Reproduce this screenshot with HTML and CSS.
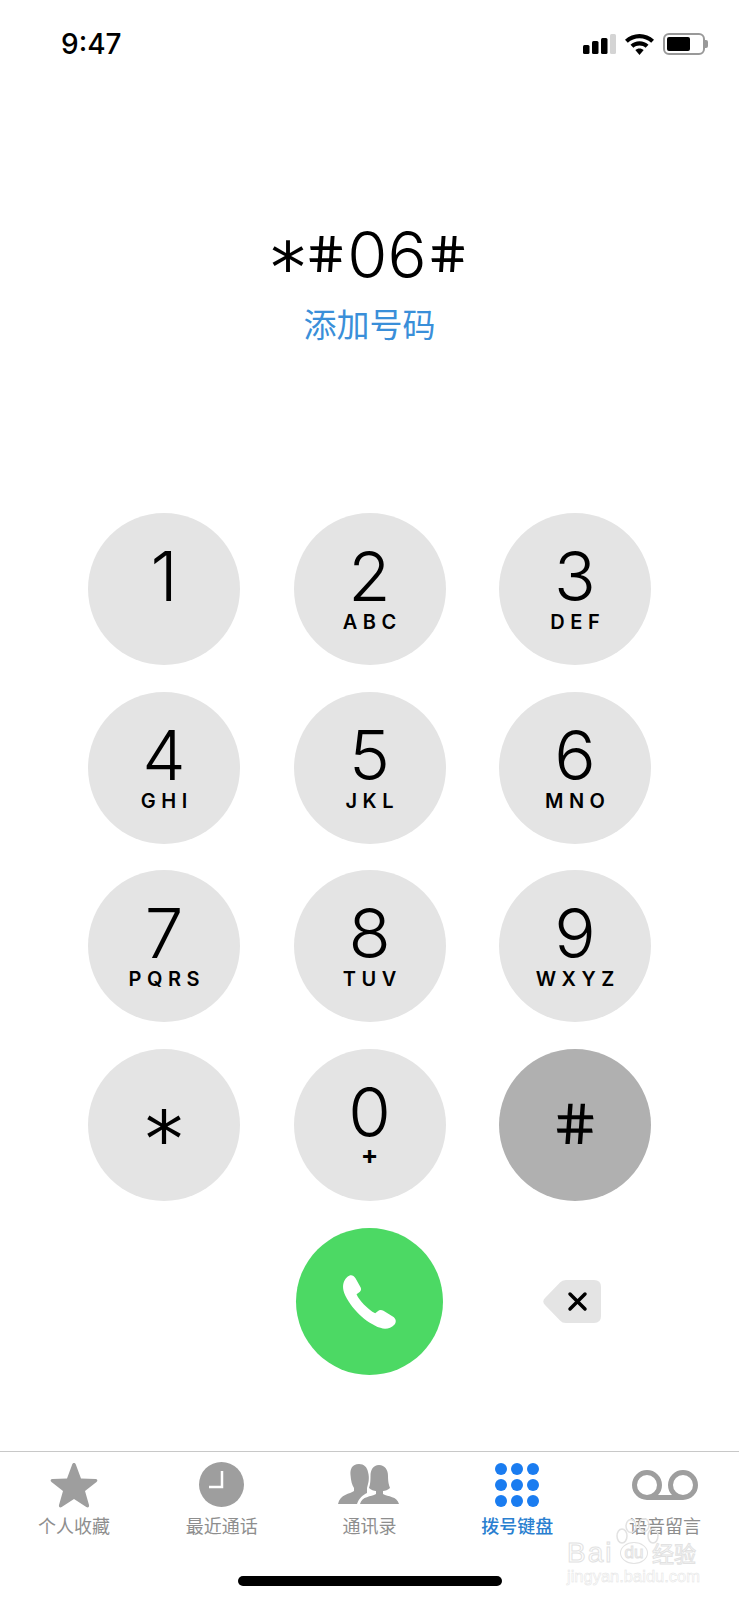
FILE: index.html
```html
<!DOCTYPE html>
<html lang="zh-CN">
<head>
    <meta charset="UTF-8">
    <meta name="viewport" content="width=device-width, initial-scale=1.0">
    <title>Keypad</title>
    <link rel="stylesheet" href="styles.css">
</head>
<body>

<div class="phone">

    <!-- Status bar -->
    <div class="status-bar">
        <span class="time">9:47</span>
        <div class="status-icons">
            <svg class="signal" width="33" height="20" viewBox="0 0 33 20">
                <rect x="0" y="11" width="6.5" height="9" rx="1.5" fill="#000"/>
                <rect x="9" y="7" width="6.5" height="13" rx="1.5" fill="#000"/>
                <rect x="18" y="4" width="6.5" height="16" rx="1.5" fill="#000"/>
                <rect x="27" y="0" width="6" height="20" rx="1.5" fill="#d4d4d4"/>
            </svg>
            <svg class="wifi" width="29" height="21" viewBox="0 0 29 21">
                <path d="M14.5 0C9 0 4 2.1 0 5.7l2.8 3C6 5.800 10 4.200 14.500 4.200S23 5.800 26.200 8.700l2.800-3C25 2.100 20 0 14.500 0z" fill="#000"/>
                <path d="M14.500 7.200c-3.500 0-6.600 1.300-9 3.500l2.900 3.100c1.600-1.400 3.700-2.300 6.100-2.300s4.500.9 6.100 2.300l2.900-3.100c-2.400-2.200-5.500-3.500-9-3.500z" fill="#000"/>
                <path d="M14.500 14.400c-1.700 0-3.100.6-4.200 1.600l4.200 5 4.200-5c-1.100-1-2.500-1.600-4.200-1.600z" fill="#000"/>
            </svg>
            <div class="battery">
                <div class="battery-body"><div class="battery-level"></div></div>
                <div class="battery-nub"></div>
            </div>
        </div>
    </div>

    <!-- Dialled number -->
    <div class="dial-display">
        <div class="dial-number"><span class="sym-star">*</span><span class="sym-hash">#</span>06<span class="sym-hash">#</span></div>
        <div class="add-number">添加号码</div>
    </div>

    <!-- Keypad -->
    <div class="keypad">
        <div class="key"><span class="digit">1</span></div>
        <div class="key"><span class="digit">2</span><span class="letters">ABC</span></div>
        <div class="key"><span class="digit">3</span><span class="letters">DEF</span></div>
        <div class="key"><span class="digit">4</span><span class="letters">GHI</span></div>
        <div class="key"><span class="digit">5</span><span class="letters">JKL</span></div>
        <div class="key"><span class="digit">6</span><span class="letters">MNO</span></div>
        <div class="key"><span class="digit">7</span><span class="letters">PQRS</span></div>
        <div class="key"><span class="digit">8</span><span class="letters">TUV</span></div>
        <div class="key"><span class="digit">9</span><span class="letters">WXYZ</span></div>
        <div class="key key-symbol"><span class="sym-star key-star">*</span></div>
        <div class="key"><span class="digit">0</span><span class="letters plus">+</span></div>
        <div class="key key-symbol key-pressed"><span class="sym-hash key-hash">#</span></div>

        <!-- Call and delete -->
        <div class="call-btn">
            <svg class="call-icon" width="58" height="58" viewBox="0 0 56 56">
                <path d="M6 3C9 0 12 1 14 4L19 13C20 15 19 17 17 18L15 19.500C17 25 26 34 33 38L35.500 36C37 34.500 39 34.500 41 35.500L50 41C53 43 54 46 51.500 49C48 52.500 43 54 38 52C24 47 9 33 3 18C1 12 2 7 6 3Z" fill="#fff"/>
            </svg>
        </div>
        <div class="delete-btn">
            <svg width="58" height="43" viewBox="0 0 58 43">
                <path d="M17 2.500Q19 0 23 0H51Q58 0 58 7V36Q58 43 51 43H23Q19 43 17 40.500L2 25Q-1.500 21.500 2 18Z" fill="#e4e4e4"/>
                <path d="M27 14L42 29M42 14L27 29" stroke="#000" stroke-width="3.500" stroke-linecap="round"/>
            </svg>
        </div>
    </div>

    <!-- Tab bar -->
    <div class="tab-bar">
        <div class="tab">
            <div class="tab-icon">
                <svg width="48" height="46" viewBox="0 0 48 46">
                    <path d="M24 1C25 1 25.500 1.600 26 3L31 16.500L45.500 17C47.500 17.100 48 18.800 46.500 20L35 29L39 43C39.500 45 38 46 36.300 45L24 37L11.700 45C10 46 8.500 45 9 43L13 29L1.500 20C0 18.800.5 17.100 2.500 17L17 16.500L22 3C22.500 1.600 23 1 24 1Z" fill="#9e9e9e"/>
                </svg>
            </div>
            <span class="tab-label">个人收藏</span>
        </div>
        <div class="tab">
            <div class="tab-icon">
                <svg width="45" height="45" viewBox="0 0 45 45">
                    <circle cx="22.500" cy="22.500" r="22.500" fill="#9e9e9e"/>
                    <path d="M23 9V25H10" fill="none" stroke="#fff" stroke-width="2.500"/>
                </svg>
            </div>
            <span class="tab-label">最近通话</span>
        </div>
        <div class="tab">
            <div class="tab-icon">
                <svg width="62" height="41" viewBox="0 0 62 41">
                    <path d="M21 0C14 0 12 5 12.500 11C13 17 14 21 16 24V27C12 30 2 30 0 40H19C21 34 25 31 29 29V24C30 20 32 15 30 8C29 3 26 0 21 0Z" fill="#9e9e9e"/>
                    <path d="M41 1C35 1 32.500 6 32.500 12C32.500 18 32 21 31 24C33 26 36 27 38 27V30C33 33 24 32 22 40H61C59 32 50 33 45 30V27C47 27 50 26 52 24C51 21 50 18 50 12C50 6 47 1 41 1Z" fill="#9e9e9e"/>
                </svg>
            </div>
            <span class="tab-label">通讯录</span>
        </div>
        <div class="tab tab-active">
            <div class="tab-icon">
                <div class="dots">
                    <i></i><i></i><i></i>
                    <i></i><i></i><i></i>
                    <i></i><i></i><i></i>
                </div>
            </div>
            <span class="tab-label">拨号键盘</span>
        </div>
        <div class="tab">
            <div class="tab-icon">
                <svg width="66" height="30" viewBox="0 0 66 30">
                    <circle cx="15" cy="15" r="12.500" fill="none" stroke="#9e9e9e" stroke-width="5"/>
                    <circle cx="51" cy="15" r="12.500" fill="none" stroke="#9e9e9e" stroke-width="5"/>
                    <path d="M15 27.500H51" stroke="#9e9e9e" stroke-width="5"/>
                </svg>
            </div>
            <span class="tab-label">语音留言</span>
        </div>
    </div>

    <div class="home-indicator"></div>

    <!-- Watermark over the corner -->
    <div class="watermark">
        <svg class="wm-paw" width="50" height="32" viewBox="0 0 50 32">
            <ellipse cx="8" cy="18" rx="5" ry="7" fill="none" stroke="#e2e2e2" stroke-width="1.500"/>
            <ellipse cx="17" cy="8" rx="5" ry="6.500" fill="none" stroke="#e2e2e2" stroke-width="1.500"/>
            <ellipse cx="30" cy="7" rx="5" ry="6.500" fill="none" stroke="#e2e2e2" stroke-width="1.500"/>
            <ellipse cx="39" cy="18" rx="5" ry="7" fill="none" stroke="#e2e2e2" stroke-width="1.500"/>
        </svg>
        <div class="wm-logo"><span class="wm-bai">Bai</span><span class="wm-du">du</span><span class="wm-cjk">经验</span></div>
        <div class="wm-url">jingyan.baidu.com</div>
    </div>
</div>

</body>
</html>
```

FILE: styles.css
```css
body {
    margin: 0;
    background-color: #fff;
    font-family: Inter, "Noto Sans CJK SC", sans-serif;
    color: #000;
}

.phone {
    position: relative;
    width: 739px;
    height: 1600px;
    overflow: hidden;
}

/* Status bar */
.status-bar {
    display: flex;
    justify-content: space-between;
    align-items: center;
    height: 88px;
    padding: 0 31px 0 61px;
    box-sizing: border-box;
}

.time {
    font-size: 28px;
    font-weight: 500;
}

.status-icons {
    display: flex;
    align-items: center;
    gap: 9px;
}

.battery {
    display: flex;
    align-items: center;
}

.battery-body {
    width: 42px;
    height: 22px;
    box-sizing: border-box;
    border: 2px solid #999;
    border-radius: 6px;
    padding: 2px;
}

.battery-level {
    width: 23px;
    height: 100%;
    background: #000;
    border-radius: 2px;
}

.battery-nub {
    width: 3px;
    height: 8px;
    background: #999;
    border-radius: 0 2px 2px 0;
}

/* Number */
.dial-display {
    height: 425px;
    padding-top: 132px;
    box-sizing: border-box;
    text-align: center;
}

.dial-number {
    display: flex;
    justify-content: center;
    align-items: center;
    height: 70px;
    font-size: 65px;
    font-weight: 300;
    line-height: 70px;
}

/* the real * and # glyphs are small and slanted, so they get pulled down and straightened */
.sym-star {
    display: inline-block;
    font-family: "DejaVu Sans", sans-serif;
    font-size: 70px;
    font-weight: 400;
    line-height: 70px;
    transform: translateY(13px);
}

.sym-hash {
    display: inline-block;
    font-family: "DejaVu Sans", sans-serif;
    font-size: 50px;
    font-weight: 400;
    line-height: 70px;
    transform: skewX(10deg);
}

.add-number {
    margin-top: 11px;
    font-family: "Noto Sans CJK SC", sans-serif;
    font-size: 33px;
    font-weight: 400;
    line-height: 44px;
    color: #3a8fd9;
}

/* Keypad */
.keypad {
    display: grid;
    grid-template-columns: repeat(3, 152px);
    grid-auto-rows: 152px;
    column-gap: 53.500px;
    row-gap: 26.700px;
    justify-content: center;
}

.key {
    display: flex;
    flex-direction: column;
    align-items: center;
    background-color: #e4e4e4;
    border-radius: 50%;
}

.key-symbol {
    justify-content: center;
}

.key-pressed {
    background-color: #b0b0b0;
}

.digit {
    margin-top: 32px;
    font-size: 69px;
    font-weight: 300;
    line-height: 62px;
}

.letters {
    margin-top: 4px;
    font-size: 20px;
    font-weight: 600;
    line-height: 22px;
    letter-spacing: 5.500px;
    padding-left: 5.500px;
}

.plus {
    margin-top: 1px;
    font-size: 26px;
    font-weight: 700;
    letter-spacing: 0;
    padding-left: 0;
}

.key-star {
    font-size: 76px;
    transform: translateY(15px);
}

.key-hash {
    font-size: 56px;
}

.call-btn {
    grid-column: 2;
    display: flex;
    justify-content: center;
    align-items: center;
    width: 147px;
    height: 147px;
    justify-self: center;
    background-color: #4cd964;
    border-radius: 50%;
}

.call-icon {
    margin-top: 4px;
}

.delete-btn {
    display: flex;
    height: 147px;
    align-items: center;
    margin-left: 44px;
}

/* Tab bar */
.tab-bar {
    display: flex;
    margin-top: 71px;
    border-top: 1px solid #c8c8c8;
    height: 122px;
    box-sizing: border-box;
}

.tab {
    flex: 1;
    display: flex;
    flex-direction: column;
    align-items: center;
    color: #8e8e8e;
}

.tab-icon {
    display: flex;
    align-items: center;
    justify-content: center;
    height: 46px;
    margin-top: 10px;
}

.tab-label {
    margin-top: 4px;
    font-family: "Noto Sans CJK SC", sans-serif;
    font-size: 18px;
    line-height: 26px;
}

.tab-active {
    color: #2a7fd0;
}

.tab-active .tab-label {
    font-weight: 500;
}

.dots {
    display: grid;
    grid-template-columns: repeat(3, 12px);
    grid-auto-rows: 12px;
    gap: 4px;
}

.dots i {
    background: #1a7cf0;
    border-radius: 50%;
}

.home-indicator {
    width: 264px;
    height: 10px;
    margin: 3px auto 0;
    background: #000;
    border-radius: 5px;
}

/* Watermark */
.watermark {
    position: absolute;
    left: 567px;
    top: 1540px;
    width: 136px;
    color: #fff;
}

.wm-paw {
    position: absolute;
    left: 47px;
    top: -22px;
}

.wm-logo {
    display: flex;
    align-items: center;
    height: 25px;
    font-family: "Liberation Sans", sans-serif;
    font-size: 28px;
    line-height: 25px;
    -webkit-text-stroke: 1px #e2e2e2;
}

.wm-bai {
    width: 46px;
    letter-spacing: 2px;
}

.wm-du {
    width: 28px;
    margin: 0 4px 0 7px;
    font-size: 17px;
    line-height: 20px;
    text-align: center;
    border: 1px solid #e2e2e2;
    border-radius: 50%;
    box-sizing: border-box;
}

.wm-cjk {
    font-family: "Noto Sans CJK SC", sans-serif;
    font-size: 22px;
}

.wm-url {
    margin-top: 2px;
    font-family: "Liberation Sans", sans-serif;
    font-size: 16.500px;
    line-height: 18px;
    white-space: nowrap;
    -webkit-text-stroke: 0.500px #e4e4e4;
}
```
